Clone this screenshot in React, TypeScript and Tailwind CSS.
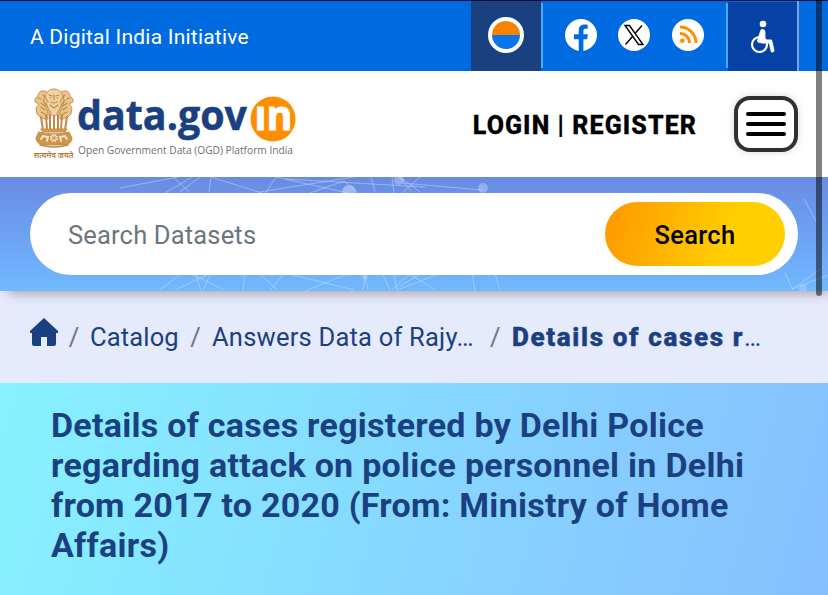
import React from 'react';

const Emblem: React.FC = () => (
  <svg width="40" height="63" viewBox="0 0 40 63" fill="none" stroke="#c28a45" strokeWidth="0.9" strokeLinecap="round">
    {/* side lions */}
    <path d="M13 4C8 1 4 4 4 8L1 11v3l4 2-3 4 1 6 3 3 5 2h3V18z" fill="#e9c58d" />
    <path d="M27 4c5-3 9 0 9 4l3 3v3l-4 2 3 4-1 6-3 3-5 2h-3V18z" fill="#e9c58d" />
    {/* front lion */}
    <path d="M12 6c2-4 5-5 8-5s6 1 8 5l2 6-2 8-3 6-5 2-5-2-3-6-2-8z" fill="#efd2a2" />
    <path d="M15 7l3 1m4 0l3-1M20 7v5m-3 2q3 2 6 0M16 17l4 3 4-3M14 21l3 4m9-4l-3 4M16 10h1m6 0h1M12 11l2 3m14-3l-2 3" strokeWidth="1.2" />
    <path d="M4 10l3 1m29-1l-3 1M7 15l4 3m22-3l-4 3M7 19l4 3m22-3l-4 3M7 24l4 2m22-2l-4 2M9 7l3 3m19-3l-3 3M12 15l2 5m14-5l-2 5M9 12l2 3m20-3l-2 3" strokeWidth="1.1" />
    {/* legs */}
    <path d="M7 29l2 13M12 27l1 15m3-15v15m4-14v14m4-15v15m4-15l-1 15m6-13l-2 13" strokeWidth="2" />
    {/* abacus */}
    <path d="M7 41h26l-2 3H9z" fill="#d89b50" />
    <path d="M5 44q15 4 30 0l3 6q0 5-6 7H8q-6-2-6-7z" fill="#cf9549" />
    <circle cx="20" cy="50" r="4.500" fill="#f8e9d0" />
    <path d="M20 46v8m-4-4h8m-7-3l6 6m0-6l-6 6" strokeWidth="0.7" />
    <path d="M7 51l2-3 5 1-1 4M33 51l-2-3-5 1 1 4" stroke="#f8e9d0" strokeWidth="1.800" />
    <path d="M6 57q14 4 28 0" strokeWidth="1.6" />
  </svg>
);

const Logo: React.FC = () => (
  <div className="flex w-[268px] shrink-0">
    <div className="flex w-11 flex-col items-center">
      <Emblem />
      <span className="whitespace-nowrap font-['Noto_Sans','Noto_Sans_Devanagari',sans-serif] text-[8px] font-medium leading-[8px] text-[#a8651c]">सत्यमेव जयते</span>
    </div>
    <div className="ml-[3px] flex flex-col">
      <svg width="224" height="54" viewBox="0 0 224 54" className="overflow-visible">
        <text x="0" y="42" textLength="170" lengthAdjust="spacingAndGlyphs" fill="#1a407f" stroke="#1a407f" strokeWidth="0.5" className="font-['Open_Sans',sans-serif] text-[42px] font-bold">data.gov</text>
        <circle cx="196" cy="31" r="22.500" fill="#ff8d00" />
        <text x="177.500" y="42" textLength="38" lengthAdjust="spacingAndGlyphs" fill="#fff" stroke="#fff" strokeWidth="1" className="font-['Open_Sans',sans-serif] text-[41px] font-bold">ın</text>
      </svg>
      <svg width="224" height="18" viewBox="0 0 224 18" className="overflow-visible">
        <text x="1" y="11.500" textLength="215" lengthAdjust="spacingAndGlyphs" fill="#6d6e71" className="font-['Open_Sans',sans-serif] text-[11px]">Open Government Data (OGD) Platform India</text>
      </svg>
    </div>
  </div>
);

const TopBar: React.FC = () => (
  <div className="flex h-[71px] border-t border-[#06103f] bg-[#006be0] text-white">
    <div className="flex-1 pl-[30px] pt-[21px] text-[21px] leading-[30px] tracking-[0.22px]">A Digital India Initiative</div>
    <div className="flex w-[70px] items-center justify-center bg-[#1b407f]">
      <svg width="36" height="36" viewBox="0 0 36 36" className="-mt-[2px]">
        <circle cx="18" cy="18" r="18" fill="#fff" />
        <path d="M4 18a14 14 0 0 1 28 0z" fill="#f58200" />
        <path d="M4 18a14 14 0 0 0 28 0z" fill="#0a75ea" />
      </svg>
    </div>
    <div className="mb-[3px] mt-[2px] flex w-[187px] items-center border-x-2 border-[#4ba9fb] pl-[22px] pb-[1px]">
      <svg width="32" height="32" viewBox="0 0 32 32">
        <circle cx="16" cy="16" r="16" fill="#fff" />
        <path d="M13.700 32V20.200H9v-5h4.700v-3.700c0-4 2.200-6 6-6 1.200 0 2.300.1 3 .3v4h-2c-1.600 0-2.300.8-2.300 2.300v3.100h4.500l-.8 5h-3.700V32z" fill="#006be0" />
      </svg>
      <svg width="32" height="32" viewBox="0 0 32 32" className="ml-[21px]">
        <circle cx="16" cy="16" r="16" fill="#fff" />
        <path d="M7 6.500h4.500L25 25.500h-4.500zM24 6.500L17 14.500M14.500 17.500L7.500 25.500" fill="none" stroke="#000" strokeWidth="1.400" />
      </svg>
      <svg width="32" height="32" viewBox="0 0 32 32" className="ml-[22px]">
        <circle cx="16" cy="16" r="16" fill="#fff" />
        <circle cx="10.300" cy="21.800" r="2.300" fill="#ff8d00" />
        <path d="M8 14.500a9.500 9.500 0 0 1 9.500 9.500M8 8a16 16 0 0 1 16 16" fill="none" stroke="#ff8d00" strokeWidth="3" />
      </svg>
    </div>
    <div className="mt-[1px] flex w-[69px] items-center justify-center bg-[#0642a5]">
      <svg width="26" height="34" viewBox="0 0 26 34" fill="none" stroke="#fff">
        <circle cx="13" cy="4" r="3.300" fill="#fff" stroke="none" />
        <circle cx="9.500" cy="24.500" r="7.500" strokeWidth="2.200" />
        <path d="M12.500 11.500L9.500 20.500M13 12v8" strokeWidth="4.800" strokeLinecap="round" />
        <path d="M12 21.500h8.500l2 9" strokeWidth="3.800" strokeLinecap="round" strokeLinejoin="round" />
      </svg>
    </div>
    <div className="w-[31px] border-l-2 border-[#77a4df]" />
  </div>
);

const Header: React.FC = () => (
  <header className="flex h-[106px] items-start bg-white pl-[33px] pr-[30px]">
    <div className="pt-[17px]"><Logo /></div>
    <a className="ml-auto mr-[37px] mt-[38px] whitespace-nowrap text-[25px] font-extrabold leading-[34px] tracking-[1.08px] text-black [-webkit-text-stroke:0.3px_#000]">LOGIN | REGISTER</a>
    <button className="mt-[25px] flex h-14 w-16 shrink-0 flex-col items-center justify-center gap-[6px] rounded-[16px] border-4 border-[#303032] bg-white shadow-[0_0_8px_rgba(0,0,0,0.15)]">
      <span className="h-1 w-10 rounded-sm bg-black" />
      <span className="h-1 w-10 rounded-sm bg-black" />
      <span className="h-1 w-10 rounded-sm bg-black" />
    </button>
  </header>
);

// faint constellation behind the search box
const Network: React.FC = () => (
  <svg className="absolute inset-0" width="828" height="114" viewBox="0 0 828 114" fill="none" stroke="#d3e4ff" strokeOpacity="0.45">
    <path d="M120 11L178 0M155 22l37-22M173 0l16 15M211 0l-2 15M211 0l54 17 11-17M260 15l93-15M276 0l72 16M285 2l140 8M310 16l34-12 14 12M371 0l4 15M392 0l2 16m5-16l12 14M402 6l80 7M420 0l-18 16M180 15L200 0M400 0l20 15" />
    <path d="M160 113l22-17M175 113l36-17M195 96l6 18M190 96l34 17M203 113l7-15M243 114l2-18M258 96l20 17M270 113l15-17M285 96l69 17M305 114l45-18M363 113l3-17m2 17l-4-17M382 96l8 17m4-17l3 18M400 109l22-13M408 96l27 17M397 113l39-15M472 96l3 18M495 96l5 18M392 113l19-17M785 96l8 17m35-15l-36 14M823 90l-29 21M804 22l12 22" />
    <g fill="#cfdfff" stroke="none">
      <circle cx="349" cy="15" r="7" fillOpacity="0.5" />
      <circle cx="399" cy="3" r="5" fillOpacity="0.4" />
      <circle cx="483" cy="11" r="5" fillOpacity="0.4" />
      <circle cx="365" cy="100" r="3" fillOpacity="0.3" />
      <circle cx="803" cy="111" r="4" fillOpacity="0.35" />
    </g>
  </svg>
);

const SearchBand: React.FC = () => (
  <section className="relative z-10 h-[114px] bg-gradient-to-b from-[#698be2] to-[#70b9ff] px-[30px] pt-4 shadow-[4px_7px_10px_-4px_rgba(110,80,80,0.45)]">
    <Network />
    <div className="relative flex h-[82px] items-center rounded-full bg-white pl-[38px] pr-[13px]">
      <input
        placeholder="Search Datasets"
        className="min-w-0 flex-1 pt-[1px] text-[25.500px] leading-8 tracking-[0.17px] text-black outline-none placeholder:text-[#6c757d] placeholder:opacity-100"
      />
      <button className="h-16 w-[180px] rounded-full bg-[linear-gradient(105deg,#ff9d00_8%,#ffcf00_68%)] pt-[2px] text-[25.500px] font-medium tracking-[0.3px] text-black">Search</button>
    </div>
  </section>
);

const Breadcrumb: React.FC = () => (
  <nav className="flex h-[92px] bg-[#e6eafd] pl-[30px] pt-[27px] text-[25.500px] leading-[38px] text-[#1b407f]">
    <svg width="28" height="28" viewBox="0 0 28 28" fill="#1b407f">
      <path d="M14 0l14 13v2h-2v11q0 2-2 2h-7v-9h-6v9H4q-2 0-2-2V15H0v-2z" />
    </svg>
    <span className="w-[32px] text-center text-[#71737d]">/</span>
    <a className="w-[89px] whitespace-nowrap tracking-[0.15px]">Catalog</a>
    <span className="w-[33px] text-center text-[#71737d]">/</span>
    <a className="w-[263px] whitespace-nowrap tracking-[0.22px]">Answers Data of Rajy…</a>
    <span className="w-[37px] pl-[15px] text-[#71737d]">/</span>
    <span className="whitespace-nowrap"><b className="text-[26px] font-extrabold tracking-[1.65px] [-webkit-text-stroke:0.5px_#1b407f]">Details of cases r</b>…</span>
  </nav>
);

export default function App() {
  return (
    <div className="relative h-[595px] w-[828px] overflow-hidden font-[Roboto,sans-serif]">
      <TopBar />
      <Header />
      <SearchBand />
      <Breadcrumb />
      <main className="h-[212px] bg-[linear-gradient(105deg,#87f3ff_0%,#86d8ff_50%,#86bfff_100%)] pl-[51px] pt-[22px]">
        <h1 className="w-[725px] whitespace-nowrap text-[34px] font-bold leading-10 tracking-[0.27px] text-[#1b407f]">
          Details of cases registered by Delhi Police<br />
          regarding attack on police personnel in Delhi<br />
          from 2017 to 2020 (From: Ministry of Home<br />
          Affairs)
        </h1>
      </main>
      {/* overlay scrollbar */}
      <div className="absolute right-[6px] top-0 z-20 h-[296px] w-[6px] rounded-b-full bg-black/50" />
    </div>
  );
}
